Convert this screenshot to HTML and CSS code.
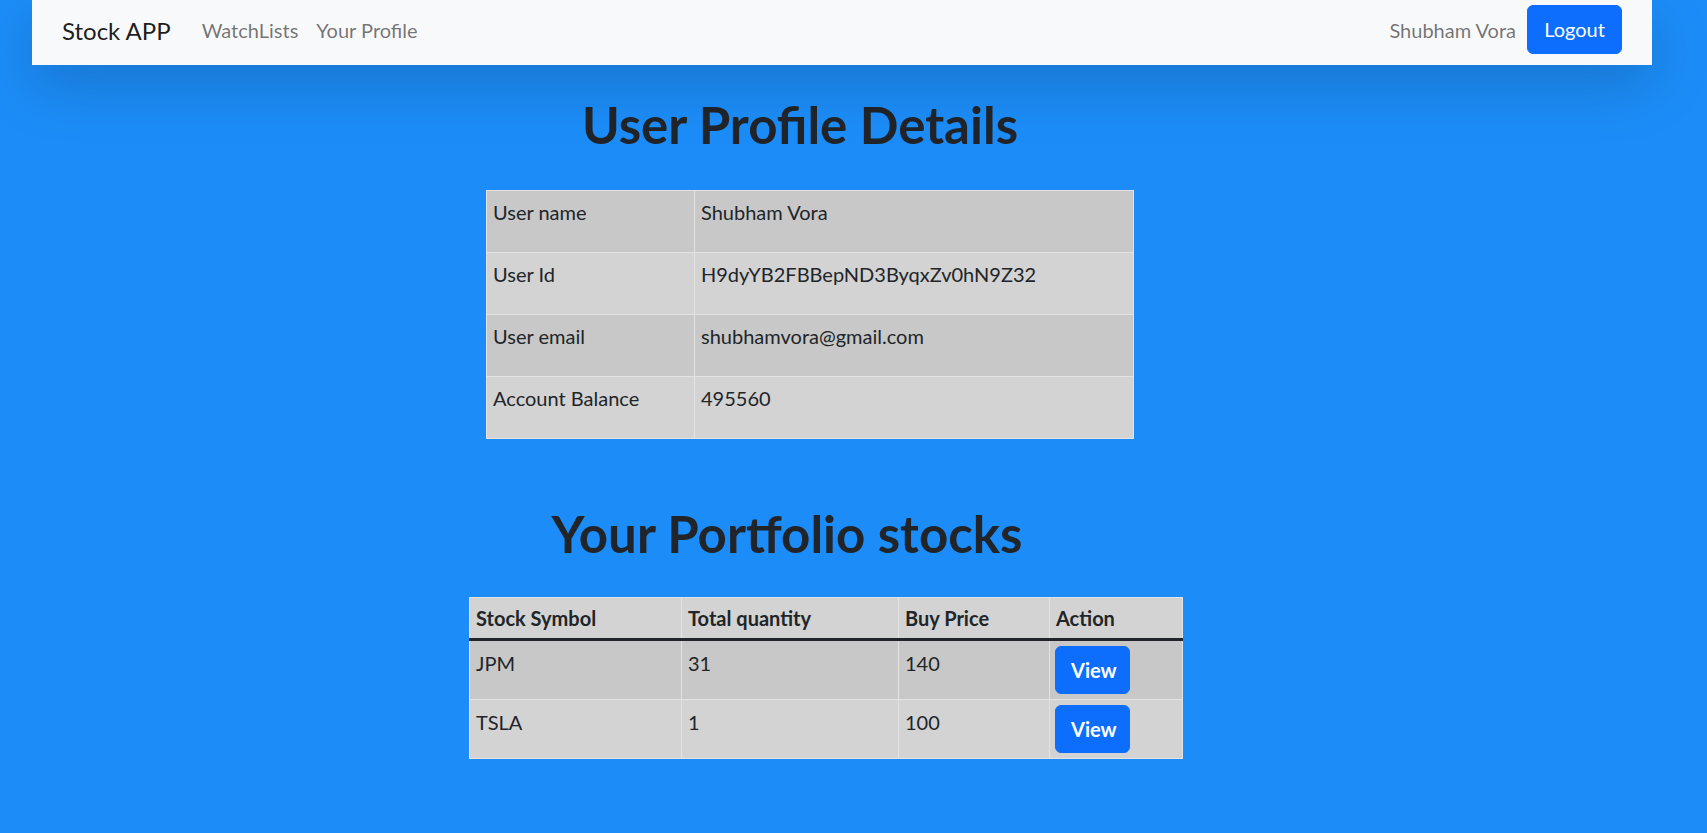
FILE: index.html
```html
<!DOCTYPE html>
<html lang="en">
<head>
<meta charset="utf-8">
<title>Stock APP</title>
<link rel="stylesheet" href="styles.css">
</head>
<body>
<nav class="navbar">
  <a class="brand" href="#">Stock APP</a>
  <a class="nav-link" href="#">WatchLists</a>
  <a class="nav-link" href="#">Your Profile</a>
  <div class="nav-right">
    <span class="user-name">Shubham Vora</span>
    <button class="btn btn-logout">Logout</button>
  </div>
</nav>
<main class="main">
  <h1 class="title title-profile">User Profile Details</h1>
  <table class="table table-profile">
    <colgroup><col class="pc1"><col class="pc2"></colgroup>
    <tbody>
      <tr class="odd"><td><p>User name</p></td><td><p>Shubham Vora</p></td></tr>
      <tr><td><p>User Id</p></td><td><p>H9dyYB2FBBepND3ByqxZv0hN9Z32</p></td></tr>
      <tr class="odd"><td><p>User email</p></td><td><p>shubhamvora@gmail.com</p></td></tr>
      <tr><td><p>Account Balance</p></td><td><p>495560</p></td></tr>
    </tbody>
  </table>
  <h1 class="title title-portfolio">Your Portfolio stocks</h1>
  <table class="table table-stocks">
    <colgroup><col class="sc1"><col class="sc2"><col class="sc3"><col class="sc4"></colgroup>
    <thead>
      <tr><th>Stock Symbol</th><th>Total quantity</th><th>Buy Price</th><th>Action</th></tr>
    </thead>
    <tbody>
      <tr class="odd"><td>JPM</td><td>31</td><td>140</td><td class="act"><button class="btn btn-view">View</button></td></tr>
      <tr><td>TSLA</td><td>1</td><td>100</td><td class="act"><button class="btn btn-view">View</button></td></tr>
    </tbody>
  </table>
</main>
</body>
</html>
```

FILE: styles.css
```css
* { box-sizing: border-box; }
html, body {
  margin: 0;
  padding: 0;
}
body {
  background: #1c8df8;
  min-height: 100vh;
  font-family: Lato, "Open Sans", sans-serif;
  color: #212529;
  font-size: 20px;
  line-height: 30px;
}
a { text-decoration: none; }

.navbar {
  margin-left: 32px;
  width: 1620px;
  height: 65px;
  background: #f8f9fa;
  box-shadow: 0 20px 60px rgba(0, 0, 0, 0.175);
  display: flex;
  align-items: center;
  padding: 0 30px 6px 30px;
  position: relative;
  z-index: 1;
}
.brand {
  font-size: 24px;
  line-height: 37px;
  color: rgba(0, 0, 0, 0.9);
  margin-right: 22px;
  padding-top: 2px;
}
.nav-link {
  font-size: 20px;
  line-height: 30px;
  color: rgba(0, 0, 0, 0.55);
  padding: 0 9px;
}
.nav-right {
  margin-left: auto;
  display: flex;
  align-items: center;
}
.user-name {
  color: rgba(0, 0, 0, 0.55);
  margin-right: 11px;
}
.btn {
  font-family: Lato, "Open Sans", sans-serif;
  background: #0d6efd;
  color: #fff;
  border: 1px solid #0d6efd;
  cursor: pointer;
}
.btn-logout {
  font-size: 20px;
  line-height: 29px;
  padding: 9px 16px;
  border-radius: 6px;
  width: 95px;
}

.main {
  width: 1600px;
  padding-bottom: 40px;
}
.title {
  font-family: Lato, "Open Sans", sans-serif;
  font-weight: 700;
  font-size: 51px;
  line-height: 60px;
  text-align: center;
  margin: 0;
}
.title-profile {
  margin-top: 30px;
  margin-bottom: 35px;
}
.title-portfolio {
  margin-top: 65px;
  margin-bottom: 33px;
  padding-right: 26px;
  font-size: 51px;
}

.table {
  border-collapse: collapse;
  background: #d3d3d3;
  table-layout: fixed;
}
.table td, .table th {
  border: 1px solid #e3e3e3;
  text-align: left;
  vertical-align: top;
  padding: 6px 6px;
}
.table tr.odd td { background: #c8c8c8; }
.table p { margin: 0 0 19px 0; }

.table-profile {
  margin-left: 486px;
  width: 647px;
}
.pc1 { width: 208px; }
.pc2 { width: 439px; }

.table-stocks {
  margin-left: 469px;
  width: 713px;
}
.sc1 { width: 212px; }
.sc2 { width: 217px; }
.sc3 { width: 151px; }
.sc4 { width: 133px; }
.table-stocks th {
  font-weight: 700;
  padding: 5px 6px;
  border-bottom: 3px solid #212529;
}
.table-stocks td {
  padding: 7px 6px 5px 6px;
}
.table-stocks td.act {
  padding: 5px 5px;
}
.btn-view {
  font-size: 20px;
  font-weight: 700;
  line-height: 30px;
  padding: 8px 15px;
  border-radius: 6px;
  width: 75px;
  display: block;
}
```
